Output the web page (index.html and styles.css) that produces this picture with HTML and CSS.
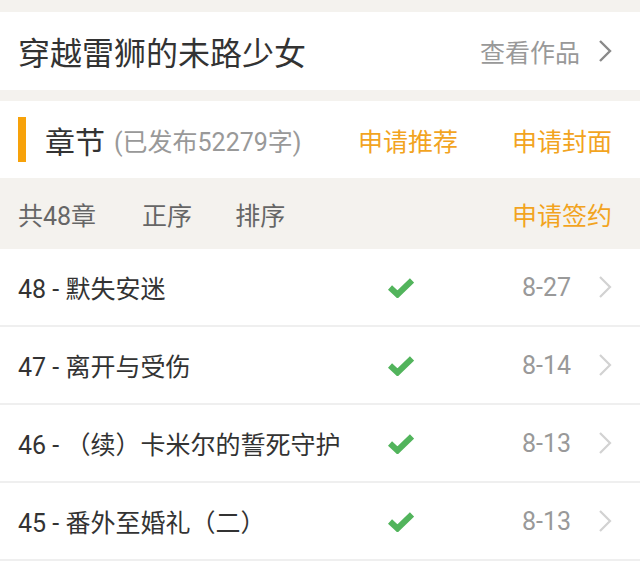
FILE: index.html
```html
<!DOCTYPE html>
<html lang="zh-CN">
<head>
<meta charset="utf-8">
<title>章节</title>
<link rel="stylesheet" href="styles.css">
</head>
<body>
<div class="page">
  <section class="book">
    <h1 class="book-title">穿越雷狮的未路少女</h1>
    <a class="book-link">查看作品
      <svg class="chev dark" viewBox="0 0 14 24" width="14" height="24"><path d="M2 2 L12 12 L2 22" fill="none" stroke="currentColor" stroke-width="2.4"/></svg>
    </a>
  </section>

  <section class="chapters">
    <div class="chap-head">
      <span class="bar"></span>
      <span class="chap-title">章节</span>
      <span class="chap-count">(已发布52279字)</span>
      <span class="spacer"></span>
      <a class="action">申请推荐</a>
      <a class="action">申请封面</a>
    </div>
    <div class="toolbar">
      <span class="tool">共48章</span>
      <span class="tool order">正序</span>
      <span class="tool">排序</span>
      <span class="spacer"></span>
      <a class="action">申请签约</a>
    </div>
    <ul class="list">
      <li class="row">
        <span class="name">48 - 默失安迷</span>
        <svg class="check" viewBox="0 0 26 21" width="26" height="21"><path d="M2 10.5 L9.5 17.5 L24 3.5" fill="none" stroke="currentColor" stroke-width="6"/></svg>
        <span class="date">8-27</span>
        <svg class="chev light" viewBox="0 0 14 24" width="14" height="24"><path d="M2 2 L12 12 L2 22" fill="none" stroke="currentColor" stroke-width="2.2"/></svg>
      </li>
      <li class="row">
        <span class="name">47 - 离开与受伤</span>
        <svg class="check" viewBox="0 0 26 21" width="26" height="21"><path d="M2 10.5 L9.5 17.5 L24 3.5" fill="none" stroke="currentColor" stroke-width="6"/></svg>
        <span class="date">8-14</span>
        <svg class="chev light" viewBox="0 0 14 24" width="14" height="24"><path d="M2 2 L12 12 L2 22" fill="none" stroke="currentColor" stroke-width="2.2"/></svg>
      </li>
      <li class="row">
        <span class="name">46 - （续）卡米尔的誓死守护</span>
        <svg class="check" viewBox="0 0 26 21" width="26" height="21"><path d="M2 10.5 L9.5 17.5 L24 3.5" fill="none" stroke="currentColor" stroke-width="6"/></svg>
        <span class="date">8-13</span>
        <svg class="chev light" viewBox="0 0 14 24" width="14" height="24"><path d="M2 2 L12 12 L2 22" fill="none" stroke="currentColor" stroke-width="2.2"/></svg>
      </li>
      <li class="row">
        <span class="name">45 - 番外至婚礼（二）</span>
        <svg class="check" viewBox="0 0 26 21" width="26" height="21"><path d="M2 10.5 L9.5 17.5 L24 3.5" fill="none" stroke="currentColor" stroke-width="6"/></svg>
        <span class="date">8-13</span>
        <svg class="chev light" viewBox="0 0 14 24" width="14" height="24"><path d="M2 2 L12 12 L2 22" fill="none" stroke="currentColor" stroke-width="2.2"/></svg>
      </li>
    </ul>
  </section>
</div>
</body>
</html>
```

FILE: styles.css
```css
html, body {
  margin: 0;
  padding: 0;
}
body {
  background: #fff;
  font-family: "Roboto", "Noto Sans CJK SC", sans-serif;
  color: #333;
}
.page {
  padding-top: 12px;
  background: #f4f2ee;
}
.book {
  background: #fff;
  height: 78px;
  display: flex;
  align-items: center;
  justify-content: space-between;
  padding: 0 28px 0 18px;
}
.book-title {
  margin: 0;
  font-size: 32px;
  font-weight: 400;
  color: #333;
}
.book-link {
  display: flex;
  align-items: center;
  gap: 18px;
  font-size: 25px;
  color: #999;
}
.chev.dark { color: #8a8a8a; }
.chev.light { color: #d2d2d2; }
.chev { display: block; }

.chapters {
  margin-top: 11px;
}
.chap-head {
  background: #fff;
  height: 77px;
  display: flex;
  align-items: center;
  padding: 0 28px 0 18px;
}
.bar {
  width: 8px;
  height: 45px;
  background: #f7a20a;
  margin-right: 19px;
}
.chap-title {
  font-size: 30px;
  color: #333;
  margin-right: 9px;
}
.chap-count {
  font-size: 25px;
  color: #999;
}
.spacer { flex: 1; }
.action {
  font-size: 25px;
  color: #f2a41f;
}
.chap-head .action + .action {
  margin-left: 54px;
}
.toolbar {
  height: 71px;
  display: flex;
  align-items: center;
  padding: 0 28px 0 18px;
  background: #f4f2ee;
}
.tool {
  font-size: 25px;
  color: #666;
  margin-right: 46px;
}
.tool.order {
  margin-right: 43px;
}
.list {
  list-style: none;
  margin: 0;
  padding: 0;
  background: #fff;
}
.row {
  height: 76px;
  border-bottom: 2px solid #efefef;
  display: grid;
  grid-template-columns: 370px 26px 1fr 14px;
  align-items: center;
  padding: 0 28px 0 18px;
  background: #fff;
}
.name {
  font-size: 25px;
  color: #333;
}
.check {
  color: #52b45c;
  display: block;
}
.date {
  text-align: right;
  font-size: 25px;
  color: #999;
  padding-right: 27px;
}
```
